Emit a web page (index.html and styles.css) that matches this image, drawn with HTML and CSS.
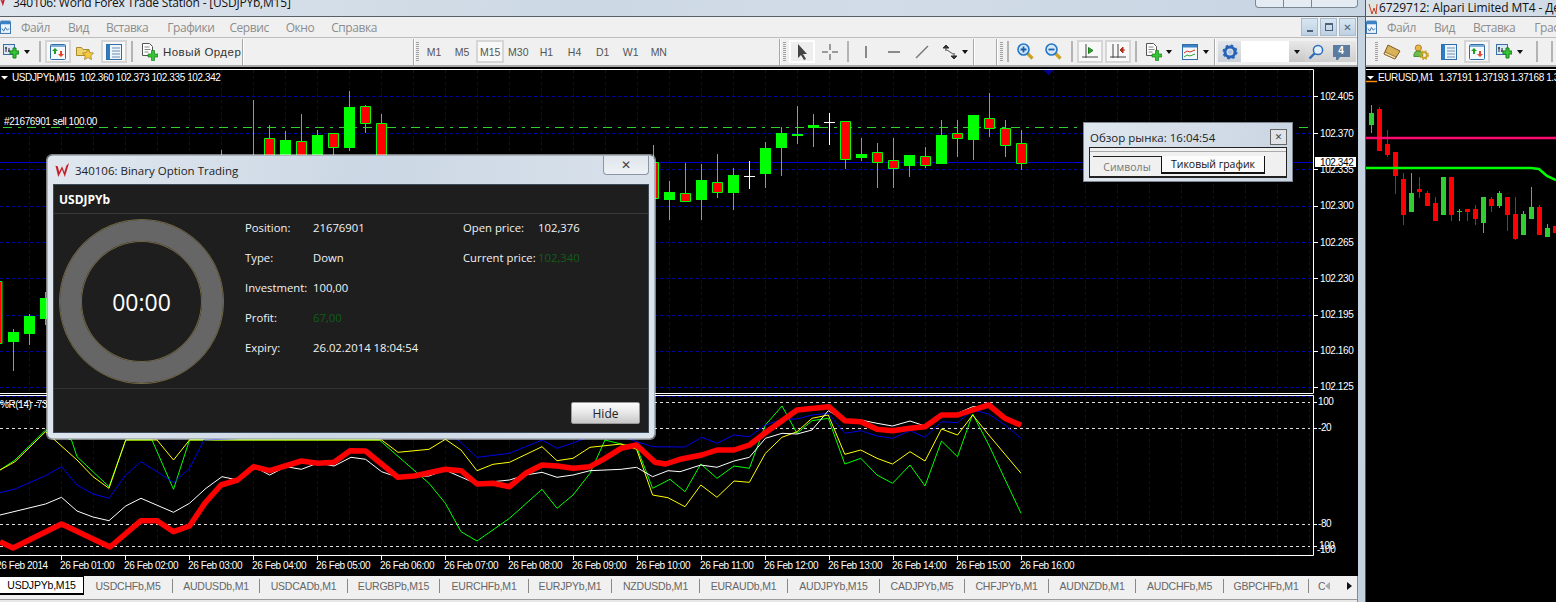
FILE: index.html
```html
<!DOCTYPE html>
<html lang="ru">
<head>
<meta charset="utf-8">
<title>World Forex Trade Station</title>
<link rel="stylesheet" href="styles.css">
</head>
<body>
<svg class="defs" aria-hidden="true">
  <symbol id="i-chart" viewBox="0 0 16 16"><rect x="0.5" y="0.5" width="11" height="10" fill="#dbe9f6" stroke="#3a6ea5"/><path d="M3 8V3M2 4h2M6 8V4M5 7h2" stroke="#222" fill="none"/><path d="M7 7h3V4h3v3h3v3h-3v4h-3v-4H7z" fill="#35c435" stroke="#17801c"/></symbol>
  <symbol id="i-watch" viewBox="0 0 16 16"><rect x="0.5" y="0.5" width="15" height="15" rx="1" fill="#f4f8fc" stroke="#2f6ea8"/><rect x="1" y="1" width="14" height="2" fill="#7fb0dc"/><path d="M5 4l3 3H6v3H4V7H2z" fill="#1fa01f"/><path d="M11 13l3-3h-2V7h-2v3H8z" fill="#e0492a"/></symbol>
  <symbol id="i-star" viewBox="0 0 18 16"><path d="M0.5 3.5h5l1.5 2h6v6H0.5z" fill="#f1d36b" stroke="#a98a2c"/><path d="M12 5l1.8 3.6 3.7.5-2.7 2.6.7 3.8-3.5-1.9-3.5 1.9.7-3.8L6.5 9.1l3.7-.5z" fill="#f5c93c" stroke="#9b7a1c" stroke-width=".7"/></symbol>
  <symbol id="i-nav" viewBox="0 0 16 16"><rect x="0.5" y="0.5" width="15" height="15" fill="#eef4fb" stroke="#2f6ea8"/><rect x="1" y="1" width="3" height="14" fill="#2f7cc4"/><path d="M6 4h8M6 7h8M6 10h8M6 13h8" stroke="#6b8fb5"/></symbol>
  <symbol id="i-order" viewBox="0 0 16 18"><path d="M0.5 0.5h7l3 3v9H0.5z" fill="#fff" stroke="#555"/><path d="M2.5 4h5M2.5 6.500h6M2.500 9h4" stroke="#888"/><path d="M6 11h3.500V7.500h3V11H16v3h-3.500v3.500h-3V14H6z" fill="#35c435" stroke="#17801c" stroke-width=".7"/></symbol>
  <symbol id="i-tools" viewBox="0 0 14 14"><path d="M3 0l3 3H0zM3 3v3M11 14l-3-3h6zM11 11V8" stroke="#333" fill="#333" stroke-width="1"/><path d="M4 5l6 4" stroke="#555"/></symbol>
  <symbol id="i-zoomin" viewBox="0 0 17 17"><path d="M10.500 10.500l5 5" stroke="#c9a227" stroke-width="3.200"/><circle cx="6.500" cy="6.500" r="5.500" fill="#d4e8fa" stroke="#2577c6" stroke-width="1.600"/><path d="M3.500 6.500h6M6.500 3.500v6" stroke="#1c5fa8" stroke-width="1.800"/></symbol>
  <symbol id="i-zoomout" viewBox="0 0 17 17"><path d="M10.500 10.500l5 5" stroke="#c9a227" stroke-width="3.200"/><circle cx="6.500" cy="6.500" r="5.500" fill="#d4e8fa" stroke="#2577c6" stroke-width="1.600"/><path d="M3.500 6.500h6" stroke="#1c5fa8" stroke-width="1.800"/></symbol>
  <symbol id="i-axis1" viewBox="0 0 16 16"><path d="M4 0v14M0 13h16" stroke="#444" fill="none"/><path d="M6.500 3.500l4.500 3-4.500 3z" fill="#2fa52f" stroke="#1d7d1d"/></symbol>
  <symbol id="i-axis2" viewBox="0 0 16 16"><path d="M3 0v14M8 0v14M0 13h16" stroke="#444" fill="none"/><path d="M15 6H11M10 6l3-3v6z" fill="#c9341f" stroke="#a82a18"/></symbol>
  <symbol id="i-tpl" viewBox="0 0 16 16"><rect x="0.500" y="0.500" width="15" height="15" fill="#f4f8fc" stroke="#2f6ea8"/><rect x="1" y="1" width="14" height="2.500" fill="#3c83c6"/><path d="M2 9l3-2 3 1 5-2" stroke="#c9341f" fill="none"/><path d="M2 13l3-2 3 1 5-2" stroke="#2fa52f" fill="none"/></symbol>
  <symbol id="i-gear" viewBox="0 0 16 16"><circle cx="8" cy="8" r="5" fill="none" stroke="#2763b8" stroke-width="3"/><circle cx="8" cy="8" r="6.500" fill="none" stroke="#2763b8" stroke-width="2" stroke-dasharray="2.500 2.600"/><circle cx="8" cy="8" r="2" fill="#a9c6ea"/></symbol>
  <symbol id="i-search" viewBox="0 0 16 16"><circle cx="10" cy="6" r="4.600" fill="#e6f0fb" stroke="#2c6db8" stroke-width="1.500"/><path d="M6.500 9.500L1.500 14.500" stroke="#2c6db8" stroke-width="2.400"/></symbol>
  <symbol id="i-book" viewBox="0 0 18 16"><path d="M5 1l12 6-5 8-11-5z" fill="#d9b25a" stroke="#7b5a1c"/><path d="M1 10l11 5 1-2L2 8z" fill="#f3e3b0" stroke="#7b5a1c" stroke-width=".7"/></symbol>
  <symbol id="i-people" viewBox="0 0 18 18"><circle cx="6" cy="4.500" r="3.500" fill="#e8b64a" stroke="#a37a1c"/><path d="M1 14c0-5 2-6 5-6s5 1 5 6z" fill="#6abf4b" stroke="#3b8426"/><circle cx="12.500" cy="12.500" r="3.200" fill="none" stroke="#c9a227" stroke-width="2.200"/><circle cx="12.500" cy="12.500" r="4.800" fill="none" stroke="#c9a227" stroke-width="1.400" stroke-dasharray="2 1.800"/></symbol>
</svg>

<div class="desk">
  <section class="win-main">
    <header class="titlebar">
      <svg class="logo-clip" viewBox="0 0 16 16"><path d="M1 2l3 13 4-8 3 8 4-14-3 2-2 6-2-6-3 6-1-8z" fill="#c8202a"/></svg>
      <span class="title-text">340106: World Forex Trade Station - [USDJPYb,M15]</span>
      <div class="caption">
        <span class="cap-btn"></span><span class="cap-btn"></span><span class="cap-btn cap-wide"></span>
      </div>
    </header>
    <div class="frame">
      <nav class="menubar">
        <svg class="menu-icon" viewBox="0 0 12 15"><rect x="0.500" y="2.500" width="11" height="12" fill="#eaf2fb" stroke="#2f6ea8"/><rect x="0.500" y="0.500" width="11" height="4" fill="#3c83c6"/><path d="M2 9l2 3 2-4 2 3 2-2" stroke="#2f6ea8" fill="none"/></svg>
        <span class="menu-item m-file">Файл</span>
        <span class="menu-item m-view">Вид</span>
        <span class="menu-item m-ins">Вставка</span>
        <span class="menu-item m-chart">Графики</span>
        <span class="menu-item m-svc">Сервис</span>
        <span class="menu-item m-win">Окно</span>
        <span class="menu-item m-help">Справка</span>
        <div class="mdi">
          <span class="mdi-btn"><span class="mdi-min"></span></span>
          <span class="mdi-btn"><span class="mdi-rest"></span></span>
          <span class="mdi-btn"><span class="mdi-x">✕</span></span>
        </div>
      </nav>
      <div class="toolbar">
        <svg class="ic16 ml-3"><use href="#i-chart"/></svg>
        <span class="caret ml-5"></span>
        <span class="sep ml-9"></span>
        <span class="press ml-4"><svg class="ic16"><use href="#i-watch"/></svg></span>
        <svg class="ic18 ml-5"><use href="#i-star"/></svg>
        <span class="press ml-7"><svg class="ic16"><use href="#i-nav"/></svg></span>
        <span class="sep ml-4"></span>
        <svg class="ic-order ml-9"><use href="#i-order"/></svg>
        <span class="order-text ml-5">Новый Ордер</span>
        <span class="divider ml-5"></span>
        <span class="divider ml-169"></span>
        <span class="grip ml-1"></span>
        <div class="periods">
          <span class="period">M1</span><span class="period">M5</span><span class="period period-on">M15</span><span class="period">M30</span><span class="period">H1</span><span class="period">H4</span><span class="period">D1</span><span class="period">W1</span><span class="period">MN</span>
        </div>
        <span class="divider ml-106"></span>
        <span class="grip ml-2"></span>
        <span class="press press-arrow ml-3"><svg class="ic16" viewBox="0 0 16 16"><path d="M4 0v14l3-3 3 5 2-1-3-5h4z" fill="#444"/></svg></span>
        <svg class="ic16 ml-7" viewBox="0 0 16 16"><path d="M8 0v6M8 10v6M0 8h6M10 8h6" stroke="#444" fill="none"/></svg>
        <span class="sep ml-9"></span>
        <svg class="ic16 ml-9" viewBox="0 0 16 16"><path d="M8 2v12" stroke="#444" fill="none" stroke-width="1.200"/></svg>
        <svg class="ic16 ml-12" viewBox="0 0 16 16"><path d="M2 8h12" stroke="#444" fill="none" stroke-width="1.200"/></svg>
        <svg class="ic16 ml-12" viewBox="0 0 16 16"><path d="M2 14L14 2" stroke="#777" fill="none" stroke-width="1.400"/></svg>
        <svg class="ic14 ml-13"><use href="#i-tools"/></svg>
        <span class="caret ml-5"></span>
        <span class="divider ml-5"></span>
        <span class="divider ml-21"></span>
        <span class="grip ml-2"></span>
        <span class="sep ml-4"></span>
        <svg class="ic17 ml-8"><use href="#i-zoomin"/></svg>
        <svg class="ic17 ml-11"><use href="#i-zoomout"/></svg>
        <span class="sep ml-9"></span>
        <span class="press ml-4"><svg class="ic16"><use href="#i-axis1"/></svg></span>
        <span class="press ml-2"><svg class="ic16"><use href="#i-axis2"/></svg></span>
        <span class="sep ml-4"></span>
        <svg class="ic-order ml-9"><use href="#i-order"/></svg>
        <span class="caret ml-4"></span>
        <svg class="ic16 ml-10"><use href="#i-tpl"/></svg>
        <span class="caret ml-5"></span>
        <span class="divider ml-5"></span>
        <div class="searchbox ml-2">
          <span class="sb-gear"><svg class="ic16"><use href="#i-gear"/></svg></span>
          <span class="sb-input"></span>
          <span class="sb-drop"><span class="caret"></span></span>
          <span class="sb-go"><svg class="ic16"><use href="#i-search"/></svg></span>
          <span class="sb-msg"><span class="bubble">4</span></span>
        </div>
      </div>

      <div class="chart-area">
        <svg class="chart" viewBox="0 67 1358 509" width="1358" height="509">
          <rect x="0" y="67" width="1358" height="509" fill="#000"/>
          <path class="grid" d="M29.500 70V393M61.500 70V393M93.500 70V393M125.500 70V393M157.500 70V393M189.500 70V393M221.500 70V393M253.500 70V393M285.500 70V393M317.500 70V393M349.500 70V393M381.500 70V393M413.500 70V393M445.500 70V393M477.500 70V393M509.500 70V393M541.500 70V393M573.500 70V393M605.500 70V393M637.500 70V393M669.500 70V393M701.500 70V393M733.500 70V393M765.500 70V393M797.500 70V393M829.500 70V393M861.500 70V393M893.500 70V393M925.500 70V393M957.500 70V393M989.500 70V393M1021.500 70V393M1053.500 70V393M1085.500 70V393M1117.500 70V393M1149.500 70V393M1181.500 70V393M1213.500 70V393M1245.500 70V393M1277.500 70V393M1309.500 70V393"/>
          <path class="grid" d="M0 96.500H1313M0 133.500H1313M0 169.500H1313M0 206.500H1313M0 242.500H1313M0 278.500H1313M0 315.500H1313M0 351.500H1313M0 387.500H1313"/>
          <path class="grid" d="M29.500 397V555M61.500 397V555M93.500 397V555M125.500 397V555M157.500 397V555M189.500 397V555M221.500 397V555M253.500 397V555M285.500 397V555M317.500 397V555M349.500 397V555M381.500 397V555M413.500 397V555M445.500 397V555M477.500 397V555M509.500 397V555M541.500 397V555M573.500 397V555M605.500 397V555M637.500 397V555M669.500 397V555M701.500 397V555M733.500 397V555M765.500 397V555M797.500 397V555M829.500 397V555M861.500 397V555M893.500 397V555M925.500 397V555M957.500 397V555M989.500 397V555M1021.500 397V555M1053.500 397V555M1085.500 397V555M1117.500 397V555M1149.500 397V555M1181.500 397V555M1213.500 397V555M1245.500 397V555M1277.500 397V555M1309.500 397V555"/>
          <path class="grid" d="M0 396.500H1313"/>
          <path class="bid-line" d="M0 162.500H1313"/>
          <path class="order-line" d="M3 127.500H1313"/>
          <path class="wick" d="M13.500 329V371M29.500 314V345M45.500 292V325M221.500 150V156M253.500 100V156M269.500 125V156M285.500 131V156M301.500 114V156M317.500 130V156M333.500 133V155M349.500 91V151M365.500 105V133M381.500 114V156M653.500 145V198M669.500 181V220M685.500 163V201M701.500 164V220M717.500 154V198M733.500 168V210M765.500 142V188M781.500 127V176M797.500 106V144M813.500 114V147M845.500 159V169M861.500 138V161M877.500 143V188M893.500 138V188M909.500 155V177M925.500 147V168M941.500 120V164M957.500 120V157M973.500 115V160M989.500 93V137M1005.500 120V157M1021.500 130V170"/>
          <path class="doji" d="M749.500 161V189M744 176.500H755M829.500 113V145M824 122.500H835"/>
          <path class="bull" d="M8 332h11v10H8zM24 316h11v18H24zM40 298h11v21H40zM280 140h11v16H280zM312 135h11v21H312zM344 107h11v41H344zM664 192h11v8H664zM696 180h11v20H696zM728 175h11v18H728zM760 148h11v26H760zM776 133h11v15H776zM792 134h11v2H792zM808 125h11v3H808zM856 154h11v4H856zM904 155h11v11H904zM936 135h11v29H936zM968 115h11v25H968z"/>
          <path class="bear" d="M-4 281.500h6v62h-6zM264.500 138.500h10v18h-10zM296.500 141.500h10v15h-10zM328.500 133.500h10v14h-10zM360.500 106.500h10v17h-10zM376.500 123.500h10v33h-10zM648.500 162.500h10v36h-10zM680.500 193.500h10v8h-10zM712.500 182.500h10v10h-10zM840.500 121.500h10v38h-10zM872.500 152.500h10v10h-10zM888.500 160.500h10v8h-10zM920.500 156.500h10v9h-10zM952.500 133.500h10v5h-10zM984.500 118.500h10v10h-10zM1000.500 128.500h10v17h-10zM1016.500 143.500h10v20h-10z"/>
          <path class="marker" d="M1043 70h11l-5.500 5z"/>
          <path class="frame-line" d="M0 69.500H1313.500V393M0 393.500H1313.500M0 395.500H1313.500V555.500H0"/>
          <path class="ticks" d="M1314 96.500h4M1314 133.500h4M1314 169.500h4M1314 206.500h4M1314 242.500h4M1314 278.500h4M1314 315.500h4M1314 351.500h4M1314 387.500h4M1314 402.500h3M1314 428.500h3M1314 524.500h3M1314 546.500h3M61.500 556v4M125.500 556v4M189.500 556v4M253.500 556v4M317.500 556v4M381.500 556v4M445.500 556v4M509.500 556v4M573.500 556v4M637.500 556v4M701.500 556v4M765.500 556v4M829.500 556v4M893.500 556v4M957.500 556v4M1021.500 556v4"/>
          <path class="level" d="M0 402.500H1310M0 428.500H1310M0 524.500H1310M0 546.500H1310"/>
          <polyline class="ind-green" points="0,470 15,460 45.500,430 71.500,440 77,456.700 109,486.700 125.700,440 152,440 173.500,489.300 189.500,440 379.400,440 429,483.300 445.400,503.300 461,531.700 477,541 509.500,518.300 542,489.300 557,508.300 573,495 590,473.300 605,440 621,444 636.600,446.700 652.600,488.300 670,479.300 685,491.700 700.800,464 717,478.300 734,466 749.400,468.300 765.400,425 782,406 797,433.300 812,420.700 828.300,418.300 844.800,464 860.800,458.300 877,475 892.500,483.300 910,465 925,486 941.500,441 957.500,456.700 972.700,414 988.800,445 1021,513.300"/>
          <polyline class="ind-yellow" points="0,470 15,461.700 45.500,431.700 77,460 93,476.700 109,488.300 125.700,440 157,440 173.500,460 189.500,440 381.600,440 398,452.300 429,449.300 445.400,439.300 461,450 477,470.700 493,464.300 509.500,462.300 542,446.700 557,460.700 573,458.300 590,447.300 621,444 636.600,449.300 652.600,495 668,497.700 685,506.700 700.800,485 717,497.300 734,481 749.400,482.300 765.400,453.300 782,437.300 797,431.700 812,418.300 828.300,415 844.800,454.300 860.800,450 877,458.300 892.500,464 910,451.700 925,461 941.500,429 957.500,435 972.700,415 988.800,435 1021,473.300"/>
          <polyline class="ind-blue" points="0,492.700 15,489 45.500,475.700 61.500,466.700 77,485 93,494 109,498.300 125.700,475 141,461.700 157,471.700 173.500,482.700 189.500,468.300 204,440 445,430 460,441.700 477,457.300 509.500,453.300 542,440 557,448.300 573,443 605,430 636.600,441.700 652.600,446.700 685,447 701.700,437.300 717,443.300 734,435 749.400,436.700 765.400,425 782,419.300 797,419 812,415 828.300,413.300 844.800,433.300 860.800,430.700 877,436 892.500,438.300 910,430.700 925,437.300 941.500,421.700 957.500,422.700 972.700,410 988.800,414 1005,425 1021,438.300"/>
          <polyline class="ind-white" points="0,515 45.500,504 61.500,497.300 77,511 93,517 109,520.700 125.700,506 141,498.300 173.500,512.300 189.500,503.300 206,488.300 222,476.700 237.600,480 253.700,466.700 269.700,475 286,466.700 301.400,469.300 318,463 334,466 351,457.300 365.600,459.300 381.600,471.700 398,477.300 429,476 445,470 477,484 493,481.700 509.500,480 525.600,475 542,472.300 557,477.300 573,475 590,470.700 621,469.300 636.600,467.300 652.600,476.700 668,470.700 680,471.700 700.800,465 717,467.300 734,461 749.400,457.300 765.400,438.300 782,433.300 797,434 812,430 828.300,410.700 844.800,420.700 860.800,420 877,423.300 892.500,426 910,421 925,426 941.500,414 957.500,413.300 972.700,406.700 988.800,406.700 1005,418.300"/>
          <polyline class="ind-red" points="0,541.700 13,548 61.500,524 110,547 141,520.700 157,520.700 173.500,531.700 189.500,526 205,503 221,485 237.600,480 253.700,466.700 269.700,470.700 301.400,461 317.900,463.300 334,462.300 350,450.700 365.600,451 398,477.300 414,476 445.400,469.300 461,470.700 477,484 493,483.300 509.500,486.700 525.600,473.300 542,465 557,466 573,468.300 590,466.700 605,458.300 621,448.300 636.600,445 655,462.300 665.600,464 680,459.300 701.700,455 717,450 734,450 749.400,445 766.700,431.700 797,410 828.700,406.700 844.800,420.700 860.800,421.700 877,429.300 892.500,430.700 910,428.300 925,426.700 941.500,415 957.500,415 972.700,410 988.800,405 1005,418.300 1021,425.300"/>
          <path class="hdr-tri" d="M1 76h7l-3.500 3.500z"/>
          <text class="lbl" x="12" y="81">USDJPYb,M15</text>
          <text class="lbl" x="80" y="81">102.360 102.373 102.335 102.342</text>
          <text class="lbl" x="4" y="125">#21676901 sell 100.00</text>
          <text class="lbl" x="0" y="408">%R(14) -73</text>
          <text class="lbl" x="1320" y="100">102.405</text>
          <text class="lbl" x="1320" y="136.500">102.370</text>
          <text class="lbl" x="1320" y="173">102.335</text>
          <text class="lbl" x="1320" y="209">102.300</text>
          <text class="lbl" x="1320" y="245.500">102.265</text>
          <text class="lbl" x="1320" y="282">102.230</text>
          <text class="lbl" x="1320" y="318">102.195</text>
          <text class="lbl" x="1320" y="354">102.160</text>
          <text class="lbl" x="1320" y="390">102.125</text>
          <text class="lbl" x="1318" y="405">100</text>
          <text class="lbl" x="1318" y="431">-20</text>
          <text class="lbl" x="1318" y="527">-80</text>
          <text class="lbl" x="1319" y="549">100</text>
          <text class="lbl" x="1317" y="553">-100</text>
          <text class="lbl" x="-4" y="569">26 Feb 2014</text>
          <text class="lbl" x="60" y="569">26 Feb 01:00</text>
          <text class="lbl" x="124" y="569">26 Feb 02:00</text>
          <text class="lbl" x="188" y="569">26 Feb 03:00</text>
          <text class="lbl" x="252" y="569">26 Feb 04:00</text>
          <text class="lbl" x="316" y="569">26 Feb 05:00</text>
          <text class="lbl" x="380" y="569">26 Feb 06:00</text>
          <text class="lbl" x="444" y="569">26 Feb 07:00</text>
          <text class="lbl" x="508" y="569">26 Feb 08:00</text>
          <text class="lbl" x="572" y="569">26 Feb 09:00</text>
          <text class="lbl" x="636" y="569">26 Feb 10:00</text>
          <text class="lbl" x="700" y="569">26 Feb 11:00</text>
          <text class="lbl" x="764" y="569">26 Feb 12:00</text>
          <text class="lbl" x="828" y="569">26 Feb 13:00</text>
          <text class="lbl" x="892" y="569">26 Feb 14:00</text>
          <text class="lbl" x="956" y="569">26 Feb 15:00</text>
          <text class="lbl" x="1020" y="569">26 Feb 16:00</text>
          <rect x="1315" y="157" width="41" height="10" fill="#fff"/>
          <text class="lbl lbl-dark" x="1320" y="165.500">102.342</text>
        </svg>

        <aside class="watch">
          <div class="watch-head">
            <span class="watch-title">Обзор рынка: 16:04:54</span>
            <span class="watch-close">✕</span>
          </div>
          <div class="watch-body">
            <span class="wtab">Символы</span>
            <span class="wtab wtab-on">Тиковый график</span>
          </div>
        </aside>

        <article class="dialog">
          <header class="dlg-title">
            <svg class="dlg-logo" viewBox="0 0 16 16"><path d="M0.500 3l3 12 4-8 3 8L15 0l-3 3-2 6.500-2.500-6-3 6L3 3.500z" fill="#c8202a"/></svg>
            <span class="dlg-caption">340106: Binary Option Trading</span>
            <span class="dlg-close">✕</span>
          </header>
          <div class="dlg-panel">
            <div class="dlg-symbol">USDJPYb</div>
            <div class="dlg-main">
              <div class="ring"><span class="ring-time">00:00</span></div>
              <div class="facts">
                <span>Position:</span><span>21676901</span><span>Open price:</span><span>102,376</span>
                <span>Type:</span><span>Down</span><span>Current price:</span><span class="gain">102,340</span>
                <span>Investment:</span><span>100,00</span><span></span><span></span>
                <span>Profit:</span><span class="gain">67,00</span><span></span><span></span>
                <span>Expiry:</span><span>26.02.2014 18:04:54</span><span></span><span></span>
              </div>
            </div>
            <footer class="dlg-foot"><button class="hide-btn">Hide</button></footer>
          </div>
        </article>
      </div>

      <div class="tabs">
        <span class="tab tab-on">USDJPYb,M15</span><span class="tab">USDCHFb,M5</span><span class="tab">AUDUSDb,M1</span><span class="tab">USDCADb,M1</span><span class="tab">EURGBPb,M15</span><span class="tab">EURCHFb,M1</span><span class="tab">EURJPYb,M1</span><span class="tab">NZDUSDb,M1</span><span class="tab">EURAUDb,M1</span><span class="tab">AUDJPYb,M15</span><span class="tab">CADJPYb,M5</span><span class="tab">CHFJPYb,M1</span><span class="tab">AUDNZDb,M1</span><span class="tab">AUDCHFb,M5</span><span class="tab">GBPCHFb,M1</span><span class="tab tab-end">C</span><span class="tab-arrow arrow-l"></span><span class="tab-arrow arrow-r"></span>
      </div>
      <div class="status"></div>
    </div>
  </section>

  <section class="win-side">
    <header class="side-title">
      <svg class="side-logo" viewBox="0 0 10 14"><rect width="10" height="14" fill="#dfe6df"/><path d="M1 2l3 10 2-6 2 6 1-10" stroke="#c8402a" fill="none"/></svg>
      <span class="side-title-text">6729712: Alpari Limited MT4 - Демо</span>
    </header>
    <nav class="menubar side-menu">
      <svg class="menu-icon" viewBox="0 0 12 15"><rect x="0.500" y="2.500" width="11" height="12" fill="#eaf2fb" stroke="#2f6ea8"/><rect x="0.500" y="0.500" width="11" height="4" fill="#3c83c6"/><path d="M2 9l2 3 2-4 2 3 2-2" stroke="#2f6ea8" fill="none"/></svg>
      <span class="menu-item s-file">Файл</span>
      <span class="menu-item s-view">Вид</span>
      <span class="menu-item s-ins">Вставка</span>
      <span class="menu-item s-chart">Графики</span>
    </nav>
    <div class="toolbar side-tools">
      <span class="grip ml-9"></span>
      <svg class="ic18 ml-5"><use href="#i-book"/></svg>
      <svg class="ic18 ml-11"><use href="#i-people"/></svg>
      <svg class="ic16 ml-11"><use href="#i-nav"/></svg>
      <span class="press ml-7"><svg class="ic16"><use href="#i-watch"/></svg></span>
      <svg class="ic16 ml-6"><use href="#i-chart"/></svg>
      <span class="caret ml-5"></span>
      <span class="sep ml-13"></span>
      <span class="sep ml-13"></span>
    </div>
    <div class="side-chart">
      <svg class="chart" viewBox="1366 67 190 535" width="190" height="535">
        <rect x="1366" y="67" width="190" height="535" fill="#000"/>
        <path class="frame-line" d="M1366 69.500H1556"/>
        <path class="s-wick-g" d="M1371.500 105V133M1411.500 173V212M1483.500 197V233M1459.500 209V221M1457 211.500H1462M1499.500 191V208M1523.500 211V235M1531.500 187V219M1547.500 224V237"/>
        <path class="s-wick-r" d="M1379.500 107V151M1387.500 130V157M1395.500 152V194M1403.500 173V225M1419.500 177V198M1427.500 191V206M1435.500 197V221M1451.500 177V221M1467.500 209V221M1475.500 205V225M1491.500 197V212M1507.500 197V231M1515.500 197V240M1539.500 205V235"/>
        <path class="s-bull" d="M1369 113h5v12h-5zM1409 193h5v19h-5zM1441 177h5v38h-5zM1481 197h5v26h-5zM1497 193h5v13h-5zM1521 214h5v21h-5zM1529 207h5v12h-5zM1545 228h5v9h-5z"/>
        <path class="s-bear" d="M1377 109h5v42h-5zM1385 144h5v11h-5zM1393 152h5v24h-5zM1401 179h5v36h-5zM1417 189h5v3h-5zM1425 193h5v13h-5zM1433 203h5v18h-5zM1449 177h5v38h-5zM1465 209h5v3h-5zM1473 209h5v10h-5zM1489 199h5v7h-5zM1505 197h5v18h-5zM1513 214h5v25h-5zM1537 207h5v28h-5zM1553 226h3v7h-3z"/>
        <path class="pink" d="M1366 138H1556"/>
        <polyline class="lime" points="1366,168 1531,168 1539,169 1547,176 1556,180"/>
        <path class="hdr-tri" d="M1367 76h7l-3.500 3.500z"/>
        <path class="hdr-under" d="M1366 81.500H1377"/>
        <text class="lbl" x="1378" y="81">EURUSD,M1</text>
        <text class="lbl" x="1439" y="81">1.37191 1.37193 1.37168 1.37168</text>
      </svg>
    </div>
  </section>
</div>
</body>
</html>
```

FILE: styles.css
```css
* { box-sizing: border-box; }
html, body { margin: 0; height: 602px; overflow: hidden; background: #000; }
.defs { display: none; }
.desk { display: flex; width: 1556px; height: 602px; font-family: "Open Sans", "Noto Sans", sans-serif; }

/* windows */
.win-main { width: 1366px; flex: none; display: flex; flex-direction: column; background: linear-gradient(100deg, #dde4ec 0%, #ccd8e4 40%, #d2dce8 60%, #c4d2e0 100%); border-right: 1px solid #555; }
.titlebar { height: 17px; flex: none; position: relative; overflow: hidden; border-bottom: 1px solid #5a6068; display: flex; }
.logo-clip { width: 13px; height: 13px; margin: -6px 0 0 -6px; flex: none; }
.title-text { margin: -7px 0 0 6px; font-size: 12px; line-height: 19px; letter-spacing: -0.2px; color: #111; white-space: nowrap; }
.caption { margin-left: auto; margin-right: 7px; display: flex; height: 8px; border: 1px solid #7c8794; border-top: 0; border-radius: 0 0 4px 4px; background: #e4ebf3; }
.cap-btn { width: 28px; border-right: 1px solid #7c8794; }
.cap-wide { width: 45px; border-right: 0; }
.frame { flex: 1; width: 1358px; display: flex; flex-direction: column; border-right: 1px solid #888; min-height: 0; }

/* menu */
.menubar { height: 21px; flex: none; background: #f0f0f0; display: flex; align-items: center; position: relative; border-bottom: 1px solid #bdbdbd; }
.menu-icon { width: 11px; height: 14px; flex: none; }
.menu-item { font-size: 12px; letter-spacing: -0.45px; color: #8d8d8d; white-space: nowrap; }
.m-file { margin-left: 10px; } .m-view { margin-left: 18px; } .m-ins { margin-left: 17px; } .m-chart { margin-left: 19px; } .m-svc { margin-left: 15px; } .m-win { margin-left: 17px; } .m-help { margin-left: 17px; }
.mdi { margin-left: auto; margin-right: 1px; display: flex; gap: 2px; }
.mdi-btn { width: 17px; height: 18px; background: linear-gradient(#d8e6f2, #bdd0e2); border: 1px solid #e8eff6; outline: 1px solid #a9bccd; outline-offset: -1px; display: flex; align-items: center; justify-content: center; position: relative; }
.mdi-min { width: 6px; height: 2px; background: #4c6178; margin-top: 7px; }
.mdi-rest { width: 8px; height: 8px; border: 1px solid #4c6178; border-top-width: 2px; }
.mdi-x { font-size: 10px; font-weight: 700; color: #4c6178; font-family: "DejaVu Sans", sans-serif; }

/* toolbar */
.toolbar { height: 29px; flex: none; background: #f0f0f0; display: flex; align-items: center; border-bottom: 2px solid #a8a8a8; }
.ic16 { width: 16px; height: 16px; flex: none; }
.ic14 { width: 14px; height: 14px; flex: none; }
.ic17 { width: 17px; height: 17px; flex: none; }
.ic18 { width: 18px; height: 16px; flex: none; }
.ic-order { width: 16px; height: 18px; flex: none; }
.caret { width: 0; height: 0; flex: none; border: 3px solid transparent; border-top: 4px solid #111; border-bottom: 0; }
.sep { width: 2px; height: 21px; background: #b4b4b4; flex: none; }
.divider { width: 2px; height: 26px; background: #a8a8a8; border-right: 1px solid #fff; flex: none; }
.grip { width: 3px; height: 20px; flex: none; background: repeating-linear-gradient(#a0a0a0 0 1px, transparent 1px 2px); }
.press { width: 26px; height: 23px; flex: none; display: flex; align-items: center; justify-content: center; border: 2px solid #d6d6d6; background: #f8f8f8; }
.press-arrow { border-color: #fff; background: #eee; }
.order-text { width: 74px; font: 11.500px "Liberation Sans", sans-serif; letter-spacing: 0.45px; color: #333; white-space: nowrap; flex: none; }
.periods { display: flex; width: 253px; flex: none; margin-left: 1px; }
.period { width: 28.100px; height: 23px; flex: none; display: flex; align-items: center; justify-content: center; font: 10.500px "Liberation Sans", sans-serif; color: #555; }
.period-on { border: 2px solid #d6d6d6; background: #f8f8f8; }
.searchbox { display: flex; height: 21px; width: 138px; flex: none; background: #d4d8dc; }
.sb-gear { width: 23px; display: flex; align-items: center; justify-content: center; background: linear-gradient(#e2e6ea, #cbd1d8); }
.sb-input { width: 48px; background: #fff; }
.sb-drop { width: 16px; display: flex; align-items: center; justify-content: center; background: linear-gradient(#e8e8e8, #c8c8c8); }
.sb-go { width: 21px; display: flex; align-items: center; justify-content: center; background: linear-gradient(#e8e8e8, #cfcfcf); }
.sb-msg { width: 30px; display: flex; align-items: center; justify-content: center; background: linear-gradient(#e8e8e8, #cfcfcf); }
.bubble { width: 17px; height: 12px; margin-bottom: 2px; background: #5b7c9f; color: #fff; font: 700 10px "Liberation Sans", sans-serif; text-align: center; line-height: 12px; position: relative; }
.bubble::after { content: ""; position: absolute; left: 3px; top: 12px; border: 2px solid transparent; border-top: 3px solid #5b7c9f; border-left: 2px solid #5b7c9f; border-bottom: 0; }
.ml-1 { margin-left: 1px; } .ml-2 { margin-left: 2px; } .ml-3 { margin-left: 3px; } .ml-4 { margin-left: 4px; } .ml-5 { margin-left: 5px; } .ml-6 { margin-left: 6px; } .ml-7 { margin-left: 7px; } .ml-8 { margin-left: 8px; } .ml-9 { margin-left: 9px; } .ml-10 { margin-left: 10px; } .ml-11 { margin-left: 11px; } .ml-12 { margin-left: 12px; } .ml-13 { margin-left: 13px; } .ml-21 { margin-left: 21px; } .ml-106 { margin-left: 106px; } .ml-169 { margin-left: 169px; }

/* chart */
.chart-area { height: 509px; flex: none; position: relative; background: #000; }
.chart { display: block; }
.grid { stroke: #0000a0; stroke-width: 1; stroke-dasharray: 3 3; fill: none; }
.bid-line { stroke: #0000cd; stroke-width: 1; fill: none; }
.order-line { stroke: #32cd32; stroke-width: 1; stroke-dasharray: 9 6 3 6; fill: none; }
.wick { stroke: #00ff00; stroke-width: 1; fill: none; }
.doji { stroke: #fff; stroke-width: 1; fill: none; }
.bull { fill: #00ff00; }
.bear { fill: #ff0000; stroke: #00ff00; stroke-width: 1; }
.marker { fill: #00008b; }
.frame-line { stroke: #fff; stroke-width: 1; fill: none; }
.ticks { stroke: #fff; stroke-width: 1; fill: none; }
.level { stroke: #ddd; stroke-width: 1; stroke-dasharray: 3 3; fill: none; }
.ind-green, .ind-yellow, .ind-blue, .ind-white { fill: none; stroke-width: 1; stroke-linejoin: round; }
.ind-green { stroke: #00ff00; } .ind-yellow { stroke: #ffff00; } .ind-blue { stroke: #0000e6; } .ind-white { stroke: #fff; }
.ind-red { fill: none; stroke: #ff0000; stroke-width: 5.500; stroke-linejoin: round; }
.hdr-tri { fill: #fff; }
.lbl { font: 10px "Liberation Sans", sans-serif; letter-spacing: -0.4px; fill: #fff; white-space: pre; }
.lbl-dark { fill: #000; }

/* market watch */
.watch { position: absolute; left: 1083px; top: 55px; width: 210px; height: 60px; background: linear-gradient(100deg, #dfe6ee, #c9d5e2); border: 1px solid #7d8691; padding: 5px; display: flex; flex-direction: column; }
.watch-head { display: flex; align-items: center; justify-content: space-between; height: 18px; flex: none; }
.watch-title { font-size: 11.500px; color: #222; margin-left: 1px; white-space: nowrap; }
.watch-close { width: 17px; height: 16px; border: 1px solid #666; background: #dfe3e8; font: 700 9px "DejaVu Sans", sans-serif; color: #444; display: flex; align-items: center; justify-content: center; }
.watch-body { height: 32px; margin-top: 1px; border: 1px solid #222; background: linear-gradient(#f0f0f0 3px, #aaa 3px 4px, #f0f0f0 4px); padding: 8px 20px 0 3px; display: flex; font-size: 10.500px; border-width: 1px 1px 2px 1px; position: relative; }
.wtab { width: 68px; height: 20px; flex: none; color: #777; display: flex; align-items: center; justify-content: center; border-top: 1px solid #222; }
.wtab-on { width: 104px; height: 18px; color: #111; background: #fbfbfb; border: 1px solid #111; border-top: 0; border-bottom-width: 2px; }

/* dialog */
.dialog { position: absolute; left: 47px; top: 88px; width: 608px; height: 284px; border-radius: 5px; background: linear-gradient(100deg, #e0e7ef, #cbd7e4 50%, #dbe3ec); border: 1px solid #aab4bf; box-shadow: 0 0 0 1px rgba(255,255,255,.5); padding: 0 5px 5px; display: flex; flex-direction: column; color: #fff; }
.dlg-title { height: 28px; flex: none; display: flex; align-items: center; position: relative; }
.dlg-logo { width: 15px; height: 15px; margin-left: 2px; flex: none; }
.dlg-caption { margin-left: 5px; font-size: 11.500px; color: #222; white-space: nowrap; }
.dlg-close { position: absolute; right: 0; top: 0; width: 46px; height: 19px; border: 1px solid #8b96a3; border-top: 0; border-radius: 0 0 4px 4px; background: linear-gradient(#dfe5ec, #eef2f6); color: #444; display: flex; align-items: center; justify-content: center; font: 700 12px "DejaVu Sans", sans-serif; }
.dlg-panel { flex: 1; background: #1e1e1e; border: 1px solid #3d4a58; display: flex; flex-direction: column; min-height: 0; }
.dlg-symbol { height: 29px; flex: none; border-bottom: 1px solid #3a3a3a; padding-left: 5px; display: flex; align-items: center; font-size: 12px; font-weight: 700; }
.dlg-main { flex: 1; display: flex; border-bottom: 1px solid #333; min-height: 0; padding-left: 5px; }
.ring { width: 163px; height: 163px; margin: 6px 1px 0; flex: none; border-radius: 50%; border: 21px solid #666; box-shadow: 0 0 0 1px #75683f, inset 0 0 0 1px #75683f; display: flex; align-items: center; justify-content: center; }
.ring-time { font-size: 23px; color: #fff; }
.facts { margin: -2px 0 0 21px; align-self: flex-start; display: grid; grid-template-columns: 68px 150px 75px auto; grid-auto-rows: 30px; align-items: center; font-size: 11.300px; white-space: nowrap; color: #f2f2f2; }
.gain { color: #0f5f14; }
.dlg-foot { height: 43px; flex: none; display: flex; justify-content: flex-end; align-items: flex-start; padding: 13px 8px 0 0; }
.hide-btn { width: 69px; height: 22px; border: 1px solid #999; border-radius: 2px; background: linear-gradient(#fbfbfb, #e9e9e9 45%, #c8c8c8); font: 12px "Open Sans", sans-serif; color: #222; padding: 0; }

/* tabs */
.tabs { height: 19px; flex: none; display: grid; grid-template-columns: 84px 89px 87px 88px 92px 89px 83px 88px 88px 92px 85px 84px 87px 88px 85px 16px 17px 1fr; background: #f0f0f0; align-items: center; overflow: hidden; }
.tab { height: 14px; font: 10.500px/14px "Liberation Sans", sans-serif; letter-spacing: -0.2px; color: #666; text-align: center; border-right: 1px solid #888; white-space: nowrap; overflow: hidden; }
.tab-on { height: 19px; line-height: 17px; background: #fff; color: #000; border: 1px solid #000; border-bottom: 2px solid #000; border-left: 0; }
.tab-end { border-right: 0; text-align: left; padding-left: 9px; }
.tab-arrow { width: 0; height: 0; border: 4px solid transparent; }
.arrow-l { border-left: 0; border-right: 5px solid #aaa; justify-self: start; }
.arrow-r { border-right: 0; border-left: 5px solid #111; justify-self: center; }
.status { flex: 1; background: linear-gradient(#f0f0f0 4px, #9a9a9a 4px 5px, #e8e8e8 5px); }

/* side window */
.win-side { flex: 1; min-width: 0; display: flex; flex-direction: column; background: linear-gradient(100deg, #dde4ec, #c9d6e4); overflow: hidden; }
.side-title { height: 17px; flex: none; display: flex; border-bottom: 1px solid #5a6068; overflow: hidden; }
.side-logo { width: 10px; height: 14px; margin: 2px 0 0 2px; flex: none; }
.side-title-text { margin-left: 1px; font-size: 12px; line-height: 15px; letter-spacing: -0.1px; color: #111; white-space: nowrap; }
.s-file { margin-left: 10px; } .s-view { margin-left: 18px; } .s-ins { margin-left: 18px; } .s-chart { margin-left: 19px; }
.side-tools { width: 190px; }
.side-chart { flex: 1; background: #000; min-height: 0; }
.s-wick-g { stroke: #32cd32; stroke-width: 1; fill: none; }
.s-wick-r { stroke: #ff0000; stroke-width: 1; fill: none; }
.s-bull { fill: #32cd32; }
.s-bear { fill: #ff0000; }
.pink { stroke: #ff0a6e; stroke-width: 2.500; fill: none; }
.lime { stroke: #00ff00; stroke-width: 2.500; fill: none; }
.hdr-under { stroke: #ff8c00; stroke-width: 1.500; fill: none; }
```
